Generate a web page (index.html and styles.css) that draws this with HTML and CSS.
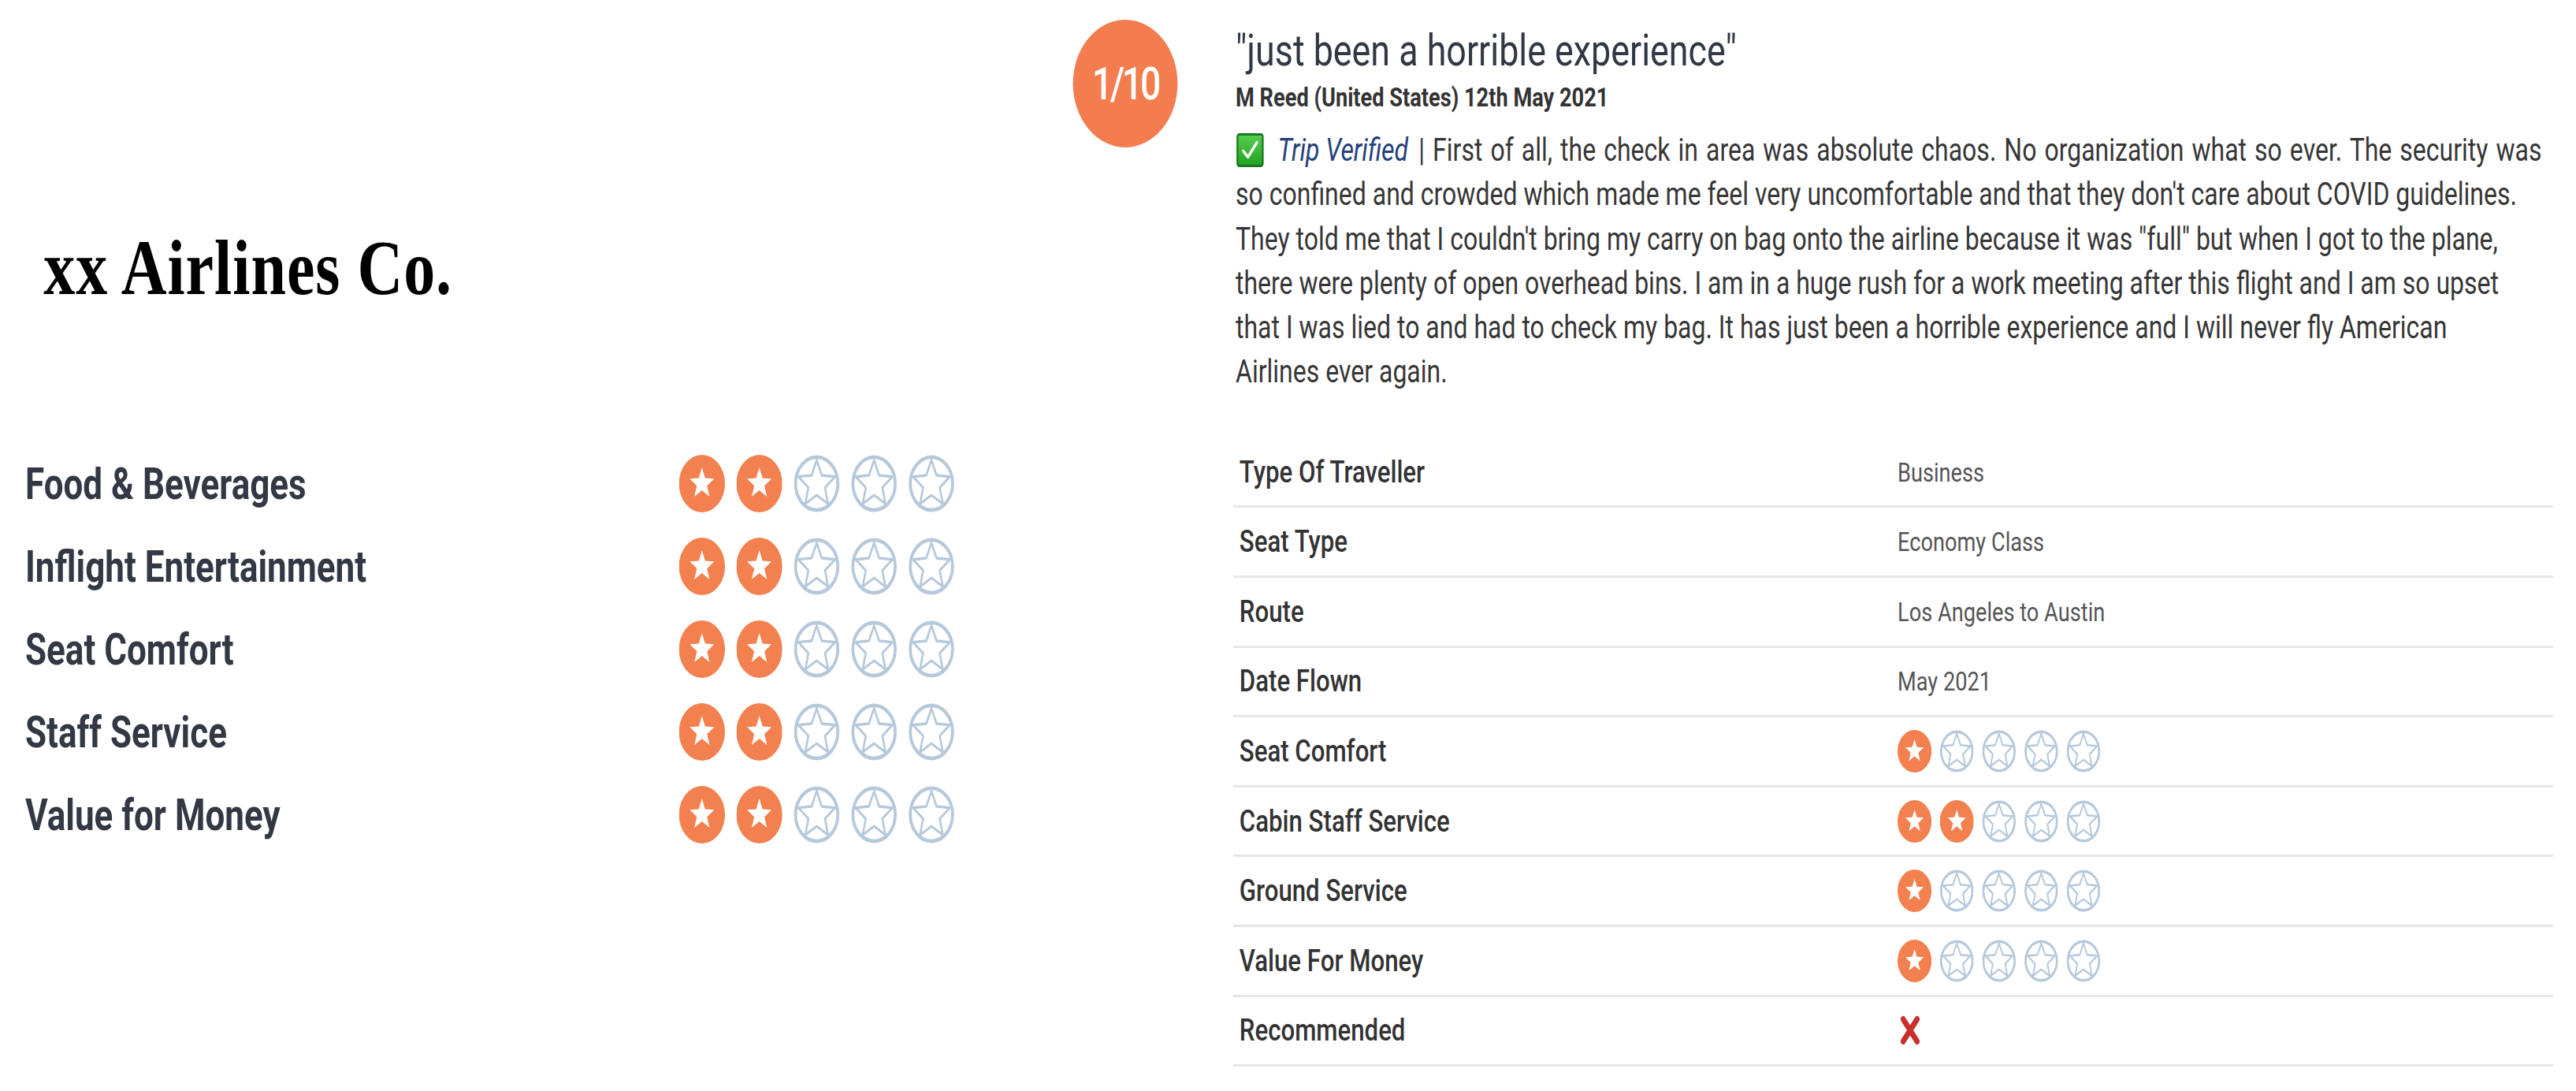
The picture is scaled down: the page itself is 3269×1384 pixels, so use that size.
FILE: index.html
```html
<!DOCTYPE html>
<html lang="en">
<head>
<meta charset="utf-8">
<title>xx Airlines Co. – Review</title>
<link rel="stylesheet" href="styles.css">
</head>
<body>
<svg class="defs" aria-hidden="true">
  <symbol id="star-on" viewBox="0 0 100 100">
    <circle cx="50" cy="50" r="50" fill="#f3804f"/>
    <polygon fill="#fff" points="50,22 56.9,40.5 76.6,41.4 61.1,53.7 66.5,72.7 50,61.8 33.5,72.7 38.9,53.7 23.4,41.4 43.1,40.5"/>
  </symbol>
  <symbol id="star-off" viewBox="0 0 100 100">
    <circle cx="50" cy="50" r="46" fill="#fff" stroke="#b6c9db" stroke-width="6.5"/>
    <polygon fill="none" stroke="#b6c9db" stroke-width="4.5" stroke-linejoin="round" points="50,9 61.17,35.63 89.94,38.02 68.07,56.87 74.69,84.98 50,70 25.31,84.98 31.93,56.87 10.06,38.02 38.83,35.63"/>
  </symbol>
</svg>

<div class="frame">
<div class="page">
  <section class="summary">
    <h1 class="airline">xx Airlines Co.</h1>
    <ul class="ratings">
      <li class="rating">
        <span class="rating-label">Food &amp; Beverages</span>
        <span class="stars stars-lg"><svg><use href="#star-on"/></svg><svg><use href="#star-on"/></svg><svg><use href="#star-off"/></svg><svg><use href="#star-off"/></svg><svg><use href="#star-off"/></svg></span>
      </li>
      <li class="rating">
        <span class="rating-label">Inflight Entertainment</span>
        <span class="stars stars-lg"><svg><use href="#star-on"/></svg><svg><use href="#star-on"/></svg><svg><use href="#star-off"/></svg><svg><use href="#star-off"/></svg><svg><use href="#star-off"/></svg></span>
      </li>
      <li class="rating">
        <span class="rating-label">Seat Comfort</span>
        <span class="stars stars-lg"><svg><use href="#star-on"/></svg><svg><use href="#star-on"/></svg><svg><use href="#star-off"/></svg><svg><use href="#star-off"/></svg><svg><use href="#star-off"/></svg></span>
      </li>
      <li class="rating">
        <span class="rating-label">Staff Service</span>
        <span class="stars stars-lg"><svg><use href="#star-on"/></svg><svg><use href="#star-on"/></svg><svg><use href="#star-off"/></svg><svg><use href="#star-off"/></svg><svg><use href="#star-off"/></svg></span>
      </li>
      <li class="rating">
        <span class="rating-label">Value for Money</span>
        <span class="stars stars-lg"><svg><use href="#star-on"/></svg><svg><use href="#star-on"/></svg><svg><use href="#star-off"/></svg><svg><use href="#star-off"/></svg><svg><use href="#star-off"/></svg></span>
      </li>
    </ul>
  </section>

  <article class="review">
    <div class="score">1/10</div>
    <div class="review-body">
      <h2 class="review-title">"just been a horrible experience"</h2>
      <p class="review-meta">M Reed (United States) 12th May 2021</p>
      <p class="review-text"><svg class="verified-icon" viewBox="0 0 44 44" aria-hidden="true"><defs><linearGradient id="vgrad" x1="0" y1="0" x2="0" y2="1"><stop offset="0" stop-color="#56cf4e"/><stop offset="1" stop-color="#22a122"/></linearGradient></defs><rect x="1.5" y="1.5" width="41" height="41" rx="3" fill="url(#vgrad)" stroke="#1b7a1f" stroke-width="3"/><path d="M11 23 L18.5 31 L33 12" fill="none" stroke="#fff" stroke-width="4" stroke-linecap="round" stroke-linejoin="round"/></svg><em class="verified">Trip Verified</em><span class="lead"> | First of all, the check in area was absolute chaos. No organization what so ever. The security was</span><br>so confined and crowded which made me feel very uncomfortable and that they don't care about COVID guidelines.<br>They told me that I couldn't bring my carry on bag onto the airline because it was "full" but when I got to the plane,<br>there were plenty of open overhead bins. I am in a huge rush for a work meeting after this flight and I am so upset<br>that I was lied to and had to check my bag. It has just been a horrible experience and I will never fly American<br>Airlines ever again.</p>

      <div class="details">
        <div class="detail-row"><span class="detail-label">Type Of Traveller</span><span class="detail-value">Business</span></div>
        <div class="detail-row"><span class="detail-label">Seat Type</span><span class="detail-value">Economy Class</span></div>
        <div class="detail-row"><span class="detail-label">Route</span><span class="detail-value">Los Angeles to Austin</span></div>
        <div class="detail-row"><span class="detail-label">Date Flown</span><span class="detail-value">May 2021</span></div>
        <div class="detail-row"><span class="detail-label">Seat Comfort</span><span class="detail-value stars stars-sm"><svg><use href="#star-on"/></svg><svg><use href="#star-off"/></svg><svg><use href="#star-off"/></svg><svg><use href="#star-off"/></svg><svg><use href="#star-off"/></svg></span></div>
        <div class="detail-row"><span class="detail-label">Cabin Staff Service</span><span class="detail-value stars stars-sm"><svg><use href="#star-on"/></svg><svg><use href="#star-on"/></svg><svg><use href="#star-off"/></svg><svg><use href="#star-off"/></svg><svg><use href="#star-off"/></svg></span></div>
        <div class="detail-row"><span class="detail-label">Ground Service</span><span class="detail-value stars stars-sm"><svg><use href="#star-on"/></svg><svg><use href="#star-off"/></svg><svg><use href="#star-off"/></svg><svg><use href="#star-off"/></svg><svg><use href="#star-off"/></svg></span></div>
        <div class="detail-row"><span class="detail-label">Value For Money</span><span class="detail-value stars stars-sm"><svg><use href="#star-on"/></svg><svg><use href="#star-off"/></svg><svg><use href="#star-off"/></svg><svg><use href="#star-off"/></svg><svg><use href="#star-off"/></svg></span></div>
        <div class="detail-row"><span class="detail-label">Recommended</span><span class="detail-value"><svg class="rec-no" viewBox="0 0 40 40" aria-label="no"><path d="M9 6 L31 34 M31 6 L9 34" stroke="#c8302c" stroke-width="8" stroke-linecap="round"/></svg></span></div>
      </div>
    </div>
  </article>
</div>
</div>
</body>
</html>
```

FILE: styles.css
```css
html, body {
  margin: 0;
  padding: 0;
  background: #fff;
  overflow: hidden;
}

.defs {
  display: block;
  width: 0;
  height: 0;
  overflow: hidden;
}

.frame {
  width: 3269px;
  height: 1384px;
  overflow: hidden;
}

/* the screenshot is horizontally condensed; the page reproduces that */
.page {
  display: flex;
  width: 4086px;
  height: 1384px;
  transform: scaleX(0.8);
  transform-origin: 0 0;
  font-family: Roboto, "Noto Sans", "Liberation Sans", sans-serif;
}

/* ---------- left summary ---------- */
.summary {
  flex: 0 0 1702px;
  box-sizing: border-box;
  padding: 282px 0 0 40px;
}

.airline {
  margin: 0 0 0 29px;
  font: 700 100px/115px "Liberation Serif", "Times New Roman", serif;
  letter-spacing: 1.2px;
  color: #000;
}

.ratings {
  list-style: none;
  margin: 164px 0 0;
  padding: 0;
}

.rating {
  display: grid;
  grid-template-columns: 1037px auto;
  align-items: center;
  height: 105px;
}

.rating-label {
  font-weight: 700;
  font-size: 55px;
  color: #333845;
}

.stars {
  display: flex;
  align-items: center;
}

.stars-lg {
  gap: 18px;
}

.stars-lg svg {
  width: 73px;
  height: 73px;
}

.stars-sm {
  gap: 13px;
}

.stars-sm svg {
  width: 54px;
  height: 54px;
}

/* ---------- review ---------- */
.review {
  flex: 1;
  display: flex;
  align-items: flex-start;
  gap: 92px;
  padding-top: 25px;
}

.score {
  flex: 0 0 166px;
  height: 162px;
  border-radius: 50%;
  background: #f37d4e;
  color: #fff;
  display: flex;
  align-items: center;
  justify-content: center;
  font-weight: 500;
  font-size: 58px;
  letter-spacing: -4px;
}

.review-body {
  flex: 1;
}

.review-title {
  margin: 6px 0 0;
  font-weight: 400;
  font-size: 56px;
  line-height: 66px;
  color: #313744;
}

.review-meta {
  margin: 6px 0 0;
  font-weight: 700;
  font-size: 34px;
  line-height: 40px;
  color: #333;
}

.review-text {
  margin: 20px 0 0;
  font-size: 40px;
  line-height: 56.3px;
  color: #363636;
}

.review-text .lead {
  word-spacing: 2.6px;
}

.verified-icon {
  width: 46px;
  height: 43px;
  vertical-align: -8px;
  margin-right: 21px;
}

.verified {
  color: #24407a;
  margin-right: 4px;
}

.details {
  width: 2094px;
  margin: 55px 0 0 -4px;
}

.detail-row {
  display: grid;
  grid-template-columns: 1046px 1fr;
  align-items: center;
  height: 88.6px;
  box-sizing: border-box;
  border-bottom: 3px solid #e6e6e6;
}

.detail-label {
  padding-left: 10px;
  font-weight: 500;
  font-size: 39px;
  color: #333;
}

.detail-value {
  padding-left: 8px;
  font-size: 34px;
  color: #555;
}

.rec-no {
  display: block;
  width: 40px;
  height: 40px;
}
```
